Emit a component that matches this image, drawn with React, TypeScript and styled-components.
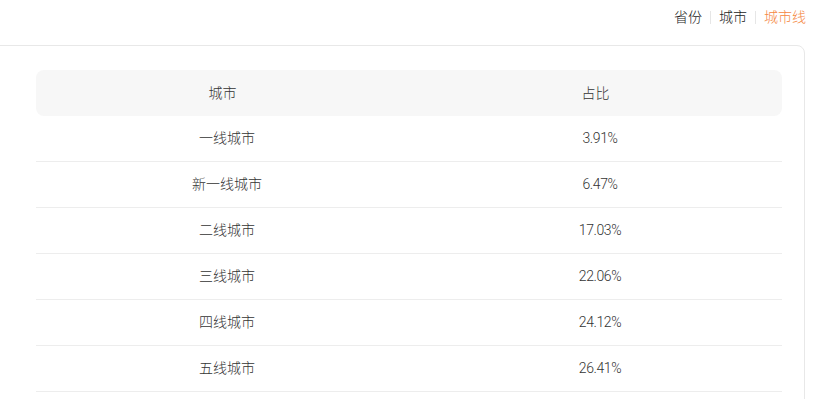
import styled, { createGlobalStyle } from "styled-components";

const GlobalStyle = createGlobalStyle`
  html, body {
    margin: 0;
    padding: 0;
    background: #fff;
    overflow: hidden;
  }
  body {
    font-family: Roboto, "Noto Sans CJK SC", sans-serif;
    color: #333;
  }
`;

const Page = styled.div`
  width: 814px;
  height: 399px;
  overflow: hidden;
`;

const Tabs = styled.div`
  display: flex;
  justify-content: flex-end;
  align-items: center;
  height: 34px;
  padding-right: 8px;
`;

const Tab = styled.span<{ $active?: boolean }>`
  font-size: 14px;
  font-weight: 300;
  line-height: 20px;
  color: ${({ $active }) => ($active ? "#f5873f" : "#222")};
  cursor: pointer;
`;

const Divider = styled.span`
  width: 1px;
  height: 13px;
  background: #e6e6e6;
  margin: 0 8px;
`;

const Card = styled.div`
  margin: 11px 9px 0 -12px;
  border: 1px solid #e8e8e8;
  border-radius: 8px;
  padding: 24px 22px 24px 47px;
`;

const Table = styled.div`
  display: flex;
  flex-direction: column;
`;

const HeadRow = styled.div`
  display: grid;
  grid-template-columns: 1fr 1fr;
  height: 46px;
  align-items: center;
  background: #f7f7f7;
  border-radius: 8px;
`;

const Row = styled.div`
  display: grid;
  grid-template-columns: 1fr 1fr;
  height: 45px;
  align-items: center;
  border-bottom: 1px solid #ededed;
`;

const Cell = styled.div<{ $body?: boolean; $num?: boolean }>`
  text-align: center;
  font-size: 14px;
  font-weight: 300;
  line-height: 20px;
  color: #333;
  padding-left: ${({ $body }) => ($body ? "9px" : "0")};
  margin-top: ${({ $body }) => ($body ? "-2px" : "0")};
  letter-spacing: ${({ $num }) => ($num ? "-0.4px" : "0")};
`;

const rows = [
  { name: "一线城市", ratio: "3.91%" },
  { name: "新一线城市", ratio: "6.47%" },
  { name: "二线城市", ratio: "17.03%" },
  { name: "三线城市", ratio: "22.06%" },
  { name: "四线城市", ratio: "24.12%" },
  { name: "五线城市", ratio: "26.41%" },
];

export default function App() {
  return (
    <Page>
      <GlobalStyle />
      <Tabs>
        <Tab>省份</Tab>
        <Divider />
        <Tab>城市</Tab>
        <Divider />
        <Tab $active>城市线</Tab>
      </Tabs>
      <Card>
        <Table>
          <HeadRow>
            <Cell>城市</Cell>
            <Cell>占比</Cell>
          </HeadRow>
          {rows.map((r) => (
            <Row key={r.name}>
              <Cell $body>{r.name}</Cell>
              <Cell $body $num>
                {r.ratio}
              </Cell>
            </Row>
          ))}
        </Table>
      </Card>
    </Page>
  );
}
